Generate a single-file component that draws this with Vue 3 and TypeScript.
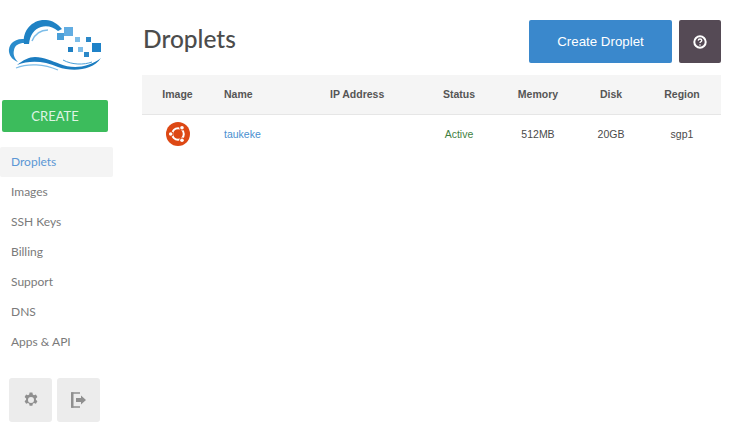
<script setup lang="ts">
const navItems = ['Droplets', 'Images', 'SSH Keys', 'Billing', 'Support', 'DNS', 'Apps & API']

const columns = [
  { label: 'Image', cls: 'center' },
  { label: 'Name', cls: 'left' },
  { label: 'IP Address', cls: 'left' },
  { label: 'Status', cls: 'center' },
  { label: 'Memory', cls: 'center' },
  { label: 'Disk', cls: 'center' },
  { label: 'Region', cls: 'center' },
]

const pixels = [
  { x: 57, y: 33, s: 7, c: '#4a9fd8' },
  { x: 64, y: 27, s: 9, c: '#62ade2' },
  { x: 75, y: 37, s: 5, c: '#7dbde8' },
  { x: 86, y: 37, s: 5, c: '#2b88c8' },
  { x: 68, y: 47, s: 5, c: '#1f7fc2' },
  { x: 78, y: 47, s: 5, c: '#7dbde8' },
  { x: 84, y: 52, s: 5, c: '#2b88c8' },
  { x: 92, y: 43, s: 9, c: '#1f82c8' },
]
</script>

<template>
  <div class="page">
    <aside class="sidebar">
      <svg class="logo" width="115" height="70" viewBox="0 10 115 70">
        <path
          d="M24 44C22 30 33 19 46 20C52 20 58 24 62 29L58 31C53 27 47 25 41 27C34 29 30 35 29 44Z"
          fill="#1f82c4"
        />
        <path d="M32 41C35 34 41 30 48 30" fill="none" stroke="#7dbde8" stroke-width="1.500" />
        <path
          d="M24 39C14 38 8 45 9 52C10 57 13 60 18 62C14 58 13 54 14 50C15 45 19 43 24 43Z"
          fill="#2a8ccc"
        />
        <path
          d="M17 65C23 60 29 57 35 57C44 57 52 61 60 64C72 69 88 68 101 58C92 71 72 72 58 67C44 61 30 60 17 65Z"
          fill="#1b7cc0"
        />
        <path d="M16 68C28 63 44 64 58 70" fill="none" stroke="#7dbde8" stroke-width="1.200" />
        <path d="M63 60C72 65 84 65 92 62" fill="none" stroke="#4a9fd8" stroke-width="1" />
        <rect
          v-for="(p, i) in pixels"
          :key="i"
          :x="p.x"
          :y="p.y"
          :width="p.s"
          :height="p.s"
          :fill="p.c"
        />
      </svg>

      <button type="button" class="create">CREATE</button>

      <nav class="nav">
        <a
          v-for="(item, i) in navItems"
          :key="item"
          class="nav-item"
          :class="{ active: i === 0 }"
        >
          {{ item }}
        </a>
      </nav>

      <div class="tools">
        <button type="button" class="tool" aria-label="Settings">
          <svg width="16" height="16" viewBox="0 0 16 16">
            <path
              fill="#8f8f8f"
              fill-rule="evenodd"
              d="M6.600 .5h2.800l.4 2 1.200.7 1.900-.7 1.500 2.500-1.500 1.400v1.400l1.500 1.400-1.500 2.500-1.900-.7-1.200.7-.4 2H6.600l-.4-2-1.200-.7-1.900.7-1.500-2.500 1.500-1.400V6.400L1.600 5 3.100 2.500l1.900.7 1.200-.7zM8 5a3 3 0 1 0 0 6 3 3 0 0 0 0-6z"
            />
          </svg>
        </button>
        <button type="button" class="tool" aria-label="Log out">
          <svg width="17" height="16" viewBox="0 0 17 16">
            <path d="M10 1H2v14h8" fill="none" stroke="#8f8f8f" stroke-width="1.500" />
            <path d="M1 .3h2.500v15.400H1z" fill="#8f8f8f" />
            <path d="M6 6h5V3.500L16 8l-5 4.500V10H6z" fill="#8f8f8f" />
          </svg>
        </button>
      </div>
    </aside>

    <main class="main">
      <header class="head">
        <h1>Droplets</h1>
        <div class="actions">
          <button type="button" class="primary">Create Droplet</button>
          <button type="button" class="help" aria-label="Help">
            <svg width="14" height="14" viewBox="0 0 14 14">
              <circle cx="7" cy="7" r="5.700" fill="none" stroke="#fff" stroke-width="2" />
              <path
                d="M5.200 5.600C5.300 4.500 6 4 7 4s1.800.6 1.800 1.500c0 1.300-1.800 1.300-1.800 2.500"
                fill="none"
                stroke="#fff"
                stroke-width="1.300"
              />
              <circle cx="7" cy="10" r=".8" fill="#fff" />
            </svg>
          </button>
        </div>
      </header>

      <table class="droplets">
        <colgroup>
          <col class="c-image" />
          <col class="c-name" />
          <col class="c-ip" />
          <col class="c-status" />
          <col class="c-memory" />
          <col class="c-disk" />
          <col class="c-region" />
        </colgroup>
        <thead>
          <tr>
            <th v-for="col in columns" :key="col.label" :class="col.cls">{{ col.label }}</th>
          </tr>
        </thead>
        <tbody>
          <tr>
            <td class="center">
              <svg class="ubuntu" width="24" height="24" viewBox="0 0 24 24">
                <circle cx="12" cy="12" r="12" fill="#dd4814" />
                <circle cx="12" cy="12" r="5.800" fill="none" stroke="#fff" stroke-width="2" />
                <circle cx="4.700" cy="12" r="2.700" fill="#dd4814" />
                <circle cx="16" cy="5.700" r="2.700" fill="#dd4814" />
                <circle cx="16" cy="18.300" r="2.700" fill="#dd4814" />
                <circle cx="4.700" cy="12" r="1.800" fill="#fff" />
                <circle cx="16" cy="5.700" r="1.800" fill="#fff" />
                <circle cx="16" cy="18.300" r="1.800" fill="#fff" />
              </svg>
            </td>
            <td class="left"><a class="link">taukeke</a></td>
            <td class="left"></td>
            <td class="center active-status">Active</td>
            <td class="center">512MB</td>
            <td class="center">20GB</td>
            <td class="center">sgp1</td>
          </tr>
        </tbody>
      </table>
    </main>
  </div>
</template>

<style>
html,
body {
  margin: 0;
  background: #fff;
}
</style>

<style scoped>
.page {
  display: flex;
  width: 730px;
  height: 435px;
  overflow: hidden;
  font-family: 'Liberation Sans', Arial, sans-serif;
}

.sidebar {
  display: flex;
  flex-direction: column;
  width: 113px;
  flex: none;
  padding-top: 10px;
  box-sizing: border-box;
}

.logo {
  display: block;
  flex: none;
}

.create {
  width: 106px;
  height: 32px;
  margin: 20px 0 0 2px;
  background: #3cbc5c;
  border: none;
  border-radius: 2px;
  color: #dff4e4;
  font-family: Lato, sans-serif;
  font-size: 13px;
  padding: 0;
}

.nav {
  display: flex;
  flex-direction: column;
  margin-top: 15px;
}

.nav-item {
  display: block;
  height: 30px;
  line-height: 29px;
  padding-left: 11px;
  border-radius: 2px;
  color: #7a7a7a;
  font-family: Lato, sans-serif;
  font-size: 12px;
}

.nav-item.active {
  background: #f4f4f4;
  color: #5b97d5;
}

.tools {
  display: flex;
  gap: 5px;
  margin: 21px 0 0 9px;
}

.tool {
  display: flex;
  align-items: center;
  justify-content: center;
  width: 43px;
  height: 44px;
  padding: 0;
  border: none;
  border-radius: 3px;
  background: #ececec;
}

.main {
  flex: none;
  width: 579px;
  margin-left: 29px;
}

.head {
  display: flex;
  justify-content: space-between;
  align-items: flex-start;
  height: 75px;
}

h1 {
  margin: 23px 0 0 1px;
  font-family: Lato, sans-serif;
  font-size: 24.500px;
  font-weight: 500;
  line-height: 32px;
  color: #4c4c4c;
}

.actions {
  display: flex;
  gap: 7px;
  margin-top: 20px;
}

.primary {
  width: 143px;
  height: 43px;
  padding: 0;
  border: none;
  border-radius: 2px;
  background: #3a88cc;
  color: #fff;
  font-family: inherit;
  font-size: 13.300px;
}

.help {
  display: flex;
  align-items: center;
  justify-content: center;
  width: 42px;
  height: 43px;
  padding: 0;
  border: none;
  border-radius: 2px;
  background: #554a55;
}

.droplets {
  width: 579px;
  table-layout: fixed;
  border-collapse: collapse;
  font-size: 10.500px;
  color: #4a4a4a;
}

.c-image {
  width: 71px;
}
.c-name {
  width: 106px;
}
.c-ip {
  width: 102px;
}
.c-status {
  width: 76px;
}
.c-memory {
  width: 82px;
}
.c-disk {
  width: 64px;
}
.c-region {
  width: 78px;
}

th {
  height: 37px;
  padding: 0 0 2px;
  background: #f5f5f5;
  border-bottom: 1px solid #e6e6e6;
  color: #555;
  font-weight: 700;
}

td {
  height: 37px;
  padding: 0 0 2px;
}

.center {
  text-align: center;
}

.left {
  text-align: left;
  padding-left: 11px;
}

.ubuntu {
  display: block;
  margin: 0 auto;
}

.link {
  color: #4a8fd0;
}

.active-status {
  color: #3f7f3f;
}
</style>
